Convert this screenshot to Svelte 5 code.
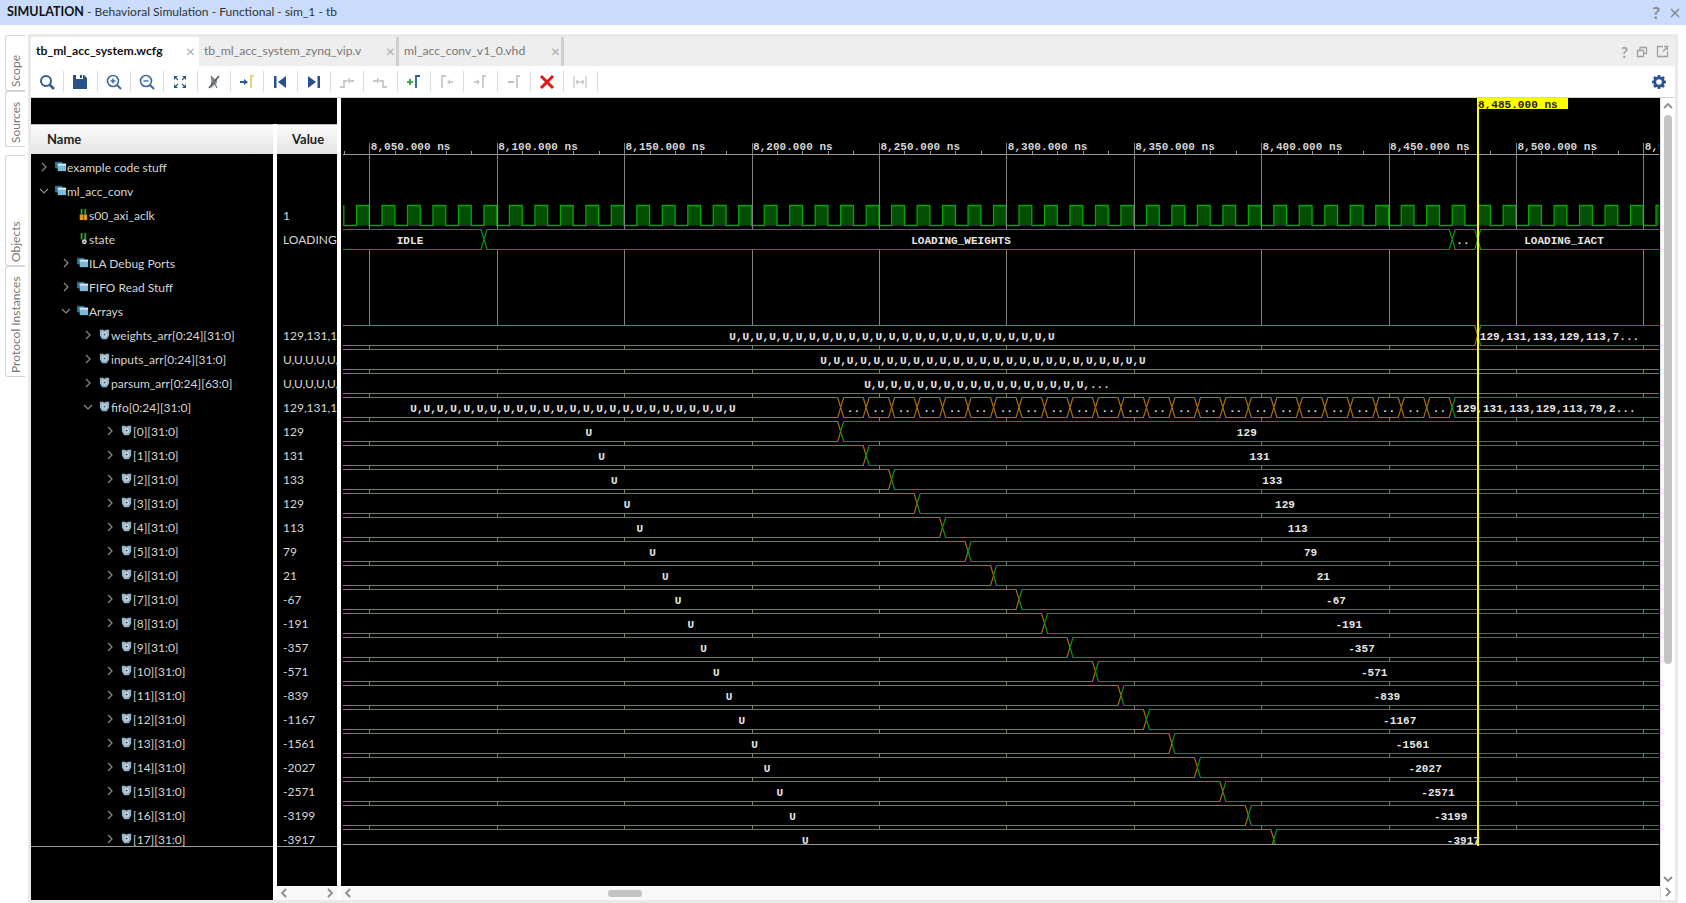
<script>
  // time axis of the wave view
  const pxPerNs = 2.548
  const tx = (t) => 369.3 + (t - 8050) * pxPerNs
  const waveLeft = 343
  const waveRight = 1659
  const rowY = (i) => 167 + 24 * i
  const ORANGE = '#a96f0c'
  const GREEN = '#0b9a0b'

  const fifoVals = [129, 131, 133, 129, 113, 79, 21, -67, -191, -357, -571, -839, -1167, -1561, -2027, -2571, -3199, -3917]

  const rows = [
    { name: 'example code stuff', lvl: 0, kind: 'group', open: false, value: '' },
    { name: 'ml_acc_conv', lvl: 0, kind: 'group', open: true, value: '' },
    { name: 's00_axi_aclk', lvl: 1, kind: 'clock', value: '1' },
    { name: 'state', lvl: 1, kind: 'state', value: 'LOADING_IACT' },
    { name: 'ILA Debug Ports', lvl: 1, kind: 'group', open: false, value: '' },
    { name: 'FIFO Read Stuff', lvl: 1, kind: 'group', open: false, value: '' },
    { name: 'Arrays', lvl: 1, kind: 'group', open: true, value: '' },
    { name: 'weights_arr[0:24][31:0]', lvl: 2, kind: 'arr', open: false, value: '129,131,133,129' },
    { name: 'inputs_arr[0:24][31:0]', lvl: 2, kind: 'arr', open: false, value: 'U,U,U,U,U,U,U,U' },
    { name: 'parsum_arr[0:24][63:0]', lvl: 2, kind: 'arr', open: false, value: 'U,U,U,U,U,U,U,U' },
    { name: 'fifo[0:24][31:0]', lvl: 2, kind: 'arr', open: true, value: '129,131,133,129' },
    ...fifoVals.map((v, k) => ({ name: `[${k}][31:0]`, lvl: 3, kind: 'arr', open: false, value: String(v) }))
  ]

  const majors = []
  for (let t = 8050; t <= 8550; t += 50) majors.push(t)
  const minors = []
  for (let t = 8040; t <= 8560; t += 10) minors.push(t)
  const pulses = []
  for (let t = 8045; t <= 8555; t += 10) pulses.push(t)

  const clockPath = () => {
    let d = `M${tx(8040)} 205 V225.5`
    for (const t of pulses) d += ` H${tx(t)} V205.5 H${tx(t + 5)} V225.5`
    return d + ` H${waveRight}`
  }

  // one bus segment: a black body that hides the grid, and its outline
  const segFill = (a, b, cy) => {
    const top = cy - 9.5
    const bot = cy + 10.5
    const mid = cy + 0.5
    const l = a == null ? `M${waveLeft} ${top}` : `M${a} ${mid} L${a + 3} ${top}`
    const r = b == null ? `H${waveRight} V${bot}` : `H${b - 3} L${b} ${mid} L${b - 3} ${bot}`
    const back = a == null ? `H${waveLeft}` : `H${a + 3}`
    return `${l} ${r} ${back} Z`
  }
  const segLine = (a, b, cy) => {
    const top = cy - 9.5
    const bot = cy + 10.5
    const mid = cy + 0.5
    const l = a == null ? `M${waveLeft} ${top}` : `M${a} ${mid} L${a + 3} ${top}`
    const r = b == null ? `H${waveRight} M${waveRight} ${bot}` : `H${b - 3} L${b} ${mid} L${b - 3} ${bot}`
    const back = a == null ? `H${waveLeft}` : `H${a + 3} L${a} ${mid}`
    return `${l} ${r} ${back}`
  }

  const mid = (a, b) => ((a ?? waveLeft) + (b ?? waveRight)) / 2 - 3
  const us = (n) => Array(n).fill('U').join(',')

  const buses = []
  const bus = (i, parts) => buses.push({ cy: rowY(i), parts })

  const stateA = tx(8095)
  const stateB = tx(8475)
  const stateC = tx(8485)
  bus(3, [
    { a: null, b: stateA, c: GREEN, label: 'IDLE', lx: 410 },
    { a: stateA, b: stateB, c: GREEN, label: 'LOADING_WEIGHTS', lx: 961 },
    { a: stateB, b: stateC, c: GREEN, label: '..', lx: 1463 },
    { a: stateC, b: null, c: GREEN, label: 'LOADING_IACT', lx: 1564 }
  ])
  bus(7, [
    { a: null, b: stateC, c: ORANGE, label: us(25), lx: 892 },
    { a: stateC, b: null, c: GREEN, label: '129,131,133,129,113,7...', lx: 1559.5 }
  ])
  bus(8, [{ a: null, b: null, c: ORANGE, label: us(25), lx: 983 }])
  bus(9, [{ a: null, b: null, c: ORANGE, label: 'U,'.repeat(17) + '...', lx: 987 }])

  const fifoParts = [{ a: null, b: tx(8235), c: ORANGE, label: us(25), lx: 573 }]
  for (let k = 0; k < 24; k++) {
    const a = tx(8235 + k * 10)
    const b = tx(8245 + k * 10)
    fifoParts.push({ a, b, c: ORANGE, label: '..', lx: (a + b) / 2 })
  }
  fifoParts.push({ a: tx(8475), b: null, c: GREEN, label: '129,131,133,129,113,79,2...', lx: 1546 })
  bus(10, fifoParts)

  fifoVals.forEach((v, k) => {
    const x = tx(8235 + k * 10)
    bus(11 + k, [
      { a: null, b: x, c: ORANGE, label: 'U', lx: mid(null, x) },
      { a: x, b: null, c: GREEN, label: String(v), lx: mid(x, null) }
    ])
  })
</script>

{#snippet chevron(open)}
  <svg class="chev" width="10" height="10" viewBox="0 0 10 10">
    {#if open}
      <path d="M1 3l4 4 4-4" />
    {:else}
      <path d="M3 1l4 4-4 4" />
    {/if}
  </svg>
{/snippet}

{#snippet rowIcon(kind)}
  <svg class="ricon" width="13" height="13" viewBox="0 0 14 14">
    {#if kind === 'group'}
      <rect x="1" y="2" width="8" height="7" fill="#2c6f8f" />
      <rect x="4" y="4" width="9" height="8" fill="#7fb9da" />
      <rect x="4" y="4" width="9" height="2" fill="#d7e9f3" />
    {:else if kind === 'arr'}
      <path d="M2 2h3.5l1.5 1 1.5-1H12v6l-2.5 4h-5L2 8z" fill="#8fb6cf" />
      <circle cx="7" cy="7" r="2.6" fill="#d9d9d9" />
      <circle cx="7" cy="7" r="1.2" fill="#555" />
    {:else if kind === 'clock'}
      <rect x="5" y="1" width="2" height="6" fill="#2f9e2f" />
      <rect x="9" y="1" width="2" height="6" fill="#2f9e2f" />
      <rect x="4" y="7" width="8" height="6" fill="#e59a1c" />
      <rect x="7.5" y="7" width="1" height="6" fill="#444" />
    {:else}
      <rect x="5" y="1" width="2" height="7" fill="#2f9e2f" />
      <rect x="9" y="1" width="2" height="7" fill="#2f9e2f" />
      <circle cx="9" cy="10.5" r="2.6" fill="#ddd" />
      <circle cx="9" cy="10.5" r="1.1" fill="#444" />
    {/if}
  </svg>
{/snippet}

<div class="title">
  <div class="title-text"><b>SIMULATION</b> - Behavioral Simulation - Functional - sim_1 - tb</div>
  <span class="q">?</span>
  <svg class="x" width="12" height="12" viewBox="0 0 12 12"><path d="M2 2l8 8M10 2l-8 8" /></svg>
</div>

<div class="main">
  <div class="side">
    <div class="stack">
      <div class="stab one"><span>Scope</span></div>
      <div class="stab one"><span>Sources</span></div>
    </div>
    <div class="stack">
      <div class="stab two"><span>Objects</span></div>
      <div class="stab two"><span>Protocol Instances</span></div>
    </div>
  </div>

  <div class="window">
    <div class="tabs">
      <div class="tab active t1"><span>tb_ml_acc_system.wcfg</span><i>×</i></div>
      <div class="tab t2"><span>tb_ml_acc_system_zynq_vip.v</span><i>×</i></div>
      <div class="tab t3"><span>ml_acc_conv_v1_0.vhd</span><i>×</i></div>
      <div class="tab-tools">
        <span class="help">?</span>
        <svg width="12" height="12" viewBox="0 0 12 12"><path d="M1.5 4.5h6v6h-6zM4 4.500V1.500h6.500v6H7.500" /></svg>
        <svg width="13" height="13" viewBox="0 0 13 13"><path d="M7 1.500H1.500v10h10V6M7 6.500l4.500-4.500M8 1.500h3.500V5" /></svg>
      </div>
    </div>

    <div class="toolbar">
      <div class="tb"><svg viewBox="0 0 20 20"><circle cx="9" cy="9" r="5" fill="none" stroke="#2f5f93" stroke-width="2" /><path d="M12.500 12.500L17 17" stroke="#2f5f93" stroke-width="2.600" /></svg></div>
      <div class="tb"><svg viewBox="0 0 20 20"><path d="M3 3h3v4h7V3h1l3 3v11H3z" fill="#27508c" /><rect x="10" y="3" width="2" height="3" fill="#27508c" /></svg></div>
      <div class="tb"><svg viewBox="0 0 20 20"><circle cx="9" cy="9" r="5.500" fill="none" stroke="#3b6a9c" stroke-width="1.600" /><path d="M6.500 9h5M9 6.500v5" stroke="#3b6a9c" stroke-width="1.400" /><path d="M13 13l4 4" stroke="#3b6a9c" stroke-width="2.200" /></svg></div>
      <div class="tb"><svg viewBox="0 0 20 20"><circle cx="9" cy="9" r="5.500" fill="none" stroke="#3b6a9c" stroke-width="1.600" /><path d="M6.500 9h5" stroke="#3b6a9c" stroke-width="1.400" /><path d="M13 13l4 4" stroke="#3b6a9c" stroke-width="2.200" /></svg></div>
      <div class="tb"><svg viewBox="0 0 20 20"><path d="M4 4h4L4 8zM16 4v4l-4-4zM4 16v-4l4 4zM16 16h-4l4-4z" fill="#2a5a92" /><path d="M6 6l2 2M14 6l-2 2M6 14l2-2M14 14l-2-2" stroke="#2a5a92" stroke-width="1.200" /></svg></div>
      <div class="tb"><svg viewBox="0 0 20 20"><path d="M7 4l6 4v3l-6 5z" fill="#8d9aa8" /><path d="M5 16L15 4" stroke="#555" stroke-width="1.500" /><path d="M7 4l6 12" stroke="#777" stroke-width="1.200" /></svg></div>
      <div class="tb"><svg viewBox="0 0 20 20"><path d="M3 9h4V7l4 3-4 3v-2H3z" fill="#2a5a92" /><path d="M17 4h-3v12" fill="none" stroke="#efcf78" stroke-width="2" /></svg></div>
      <div class="tb"><svg viewBox="0 0 20 20"><rect x="4" y="4" width="2.500" height="12" fill="#27508c" /><path d="M16 4v12l-8-6z" fill="#27508c" /></svg></div>
      <div class="tb"><svg viewBox="0 0 20 20"><rect x="13.500" y="4" width="2.500" height="12" fill="#27508c" /><path d="M4 4v12l8-6z" fill="#27508c" /></svg></div>
      <div class="tb"><svg viewBox="0 0 20 20"><path d="M3 15h4V9h3" fill="none" stroke="#c8c8c8" stroke-width="1.800" /><path d="M17 8h-4V5l-3 3.500 3 3.500V10h4z" fill="#c8c8c8" /></svg></div>
      <div class="tb"><svg viewBox="0 0 20 20"><path d="M17 15h-4V9h-3" fill="none" stroke="#c8c8c8" stroke-width="1.800" /><path d="M3 8h4V5l3 3.500L7 12v-2H3z" fill="#c8c8c8" /></svg></div>
      <div class="tb"><svg viewBox="0 0 20 20"><path d="M3 10h6M6 7v6" stroke="#3daa48" stroke-width="2" /><path d="M16 4h-4v12" fill="none" stroke="#2f5f93" stroke-width="1.800" /></svg></div>
      <div class="tb"><svg viewBox="0 0 20 20"><path d="M9 4H5v12" fill="none" stroke="#c8c8c8" stroke-width="1.800" /><path d="M16 9h-3V7l-3 3 3 3v-2h3z" fill="#c8c8c8" /></svg></div>
      <div class="tb"><svg viewBox="0 0 20 20"><path d="M16 4h-3v12" fill="none" stroke="#c8c8c8" stroke-width="1.800" /><path d="M4 9h3V7l3 3-3 3v-2H4z" fill="#c8c8c8" /></svg></div>
      <div class="tb"><svg viewBox="0 0 20 20"><path d="M4 10h6" stroke="#b8b8b8" stroke-width="1.800" /><path d="M16 4h-3v12" fill="none" stroke="#c8c8c8" stroke-width="1.800" /></svg></div>
      <div class="tb"><svg viewBox="0 0 20 20"><path d="M4 4l12 12M16 4L4 16" stroke="#e01818" stroke-width="3" /></svg></div>
      <div class="tb last"><svg viewBox="0 0 20 20"><path d="M4 4v12M16 4v12M6 10h8M6 10l2-2M6 10l2 2M14 10l-2-2M14 10l-2 2" fill="none" stroke="#c8c8c8" stroke-width="1.300" /></svg></div>
      <div class="gear">
        <svg viewBox="0 0 20 20" width="20" height="20">
          <circle cx="10" cy="10" r="4.300" fill="none" stroke="#2a5590" stroke-width="3" />
          <path d="M10 3v3M10 14v3M3 10h3M14 10h3M5 5l2 2M13 13l2 2M15 5l-2 2M7 13l-2 2" stroke="#2a5590" stroke-width="2.600" />
        </svg>
      </div>
    </div>

    <div class="content">
      <div class="left">
        <div class="spacer"></div>
        <div class="head name">Name</div>
        <div class="head val">Value</div>
        <div class="col names">
          <div class="clip">
            {#each rows as r}
              <div class="row l{r.lvl}">
                <span class="chev-box">
                  {#if r.open !== undefined}{@render chevron(r.open)}{/if}
                </span>
                {@render rowIcon(r.kind)}
                <span class="label">{r.name}</span>
              </div>
            {/each}
          </div>
        </div>
        <div class="col values">
          <div class="clip">
            {#each rows as r}
              <div class="row vrow">{r.value}</div>
            {/each}
          </div>
          <div class="rest"></div>
          <div class="hbar">
            <svg width="10" height="12" viewBox="0 0 10 12"><path d="M7 2L3 6l4 4" /></svg>
            <svg width="10" height="12" viewBox="0 0 10 12"><path d="M3 2l4 4-4 4" /></svg>
          </div>
        </div>
      </div>

      <div class="wave-col">
        <svg class="wave" viewBox="341 98 1319 788" width="1319" height="788">
          <defs>
            <clipPath id="view"><rect x={waveLeft} y="98" width={waveRight - waveLeft} height="746" /></clipPath>
          </defs>
          <g clip-path="url(#view)">
            {#each pulses as t}
              <rect x={tx(t)} y="205.500" width={5 * pxPerNs} height="20" fill="#024f02" />
            {/each}
            <path d={clockPath()} fill="none" stroke="#06a506" stroke-width="1.300" />

            <path d="M{waveLeft} 154.500H{waveRight}" stroke="#9a9a9a" />
            {#each minors as t}
              <path d="M{Math.round(tx(t)) + 0.5} 151V154" stroke="#9a9a9a" />
            {/each}
            {#each majors as t}
              <path d="M{Math.round(tx(t)) + 0.5} 143V844" stroke="#808080" />
              <text class="ruler" x={tx(t) + 1.500} y="150">{t.toLocaleString('en-US')}.000 ns</text>
            {/each}

            {#each buses as b}
              {#each b.parts as p}
                <path d={segFill(p.a, p.b, b.cy)} fill="#000" />
                <path d={segLine(p.a, p.b, b.cy)} fill="none" stroke={p.c} stroke-width="1.200" />
              {/each}
              {#each b.parts as p}
                <text class="sig" x={p.lx} y={b.cy + 4.500}>{p.label}</text>
              {/each}
            {/each}
          </g>
          <path d="M{waveLeft} 844.500H{waveRight}" stroke="#9a9a9a" />
          <rect x="1477" y="98" width="2" height="748" fill="#ffff00" />
          <rect x="1477" y="98" width="91" height="11" fill="#ffff00" />
          <text class="flag" x="1478" y="108">8,485.000 ns</text>
        </svg>
        <div class="hbar wave-bar">
          <svg width="10" height="12" viewBox="0 0 10 12"><path d="M7 2L3 6l4 4" /></svg>
          <div class="hthumb"></div>
        </div>
      </div>

      <div class="vbar">
        <svg width="12" height="8" viewBox="0 0 12 8"><path d="M2 6l4-4 4 4" /></svg>
        <div class="vthumb"></div>
        <svg class="down" width="12" height="8" viewBox="0 0 12 8"><path d="M2 2l4 4 4-4" /></svg>
        <svg class="corner" width="10" height="12" viewBox="0 0 10 12"><path d="M3 2l4 4-4 4" /></svg>
      </div>
    </div>
  </div>
</div>

<style>
  :global(body) {
    margin: 0;
    background: #fff;
    overflow: hidden;
    font-family: Lato, 'Noto Sans', sans-serif;
  }
  .title {
    height: 25px;
    background: #c9dcfb;
    display: flex;
    align-items: center;
    padding: 0 5px 0 7px;
    font-size: 12px;
    color: #333;
  }
  .title-text {
    flex: 1;
    padding-bottom: 2px;
  }
  .title-text b {
    color: #111;
    font-size: 12.5px;
  }
  .title .q {
    color: #888;
    font-size: 17px;
    font-weight: 700;
    margin-right: 9px;
  }
  .title .x path {
    stroke: #888;
    stroke-width: 1.500;
    fill: none;
  }
  .main {
    display: flex;
    height: 878px;
    padding-top: 9px;
    box-sizing: border-box;
  }
  .side {
    width: 28px;
    padding: 1px 0 0 5px;
    box-sizing: border-box;
    display: flex;
    flex-direction: column;
    gap: 8px;
  }
  .stack {
    display: flex;
    flex-direction: column;
  }
  .stab {
    width: 20px;
    box-sizing: border-box;
    border: 1px solid #d4d4d4;
    border-right: none;
    border-radius: 3px 0 0 3px;
    display: flex;
    justify-content: center;
    color: #777;
    font-size: 12px;
  }
  .stab span {
    writing-mode: vertical-rl;
    transform: rotate(180deg);
    padding-top: 3px;
    white-space: nowrap;
  }
  .stab.one {
    height: 56px;
  }
  .stab.two {
    height: 111px;
  }
  .window {
    width: 1650px;
    height: 869px;
    background: #e9e9e9;
    padding: 3px 3px 3px 3px;
    box-sizing: border-box;
    display: flex;
    flex-direction: column;
  }
  .tabs {
    height: 29px;
    display: flex;
    background: #eee;
    flex: none;
  }
  .tab {
    display: flex;
    align-items: center;
    justify-content: space-between;
    box-sizing: border-box;
    padding: 0 1px 2px 5px;
    font-size: 12.2px;
    color: #777;
    border-right: 3px solid #cfcfcf;
    white-space: nowrap;
  }
  .t1 {
    width: 168px;
    padding-right: 4px;
  }
  .t2 {
    width: 200px;
  }
  .t3 {
    width: 165px;
  }
  .tab.active {
    background: #fff;
    color: #111;
    font-weight: 700;
    border-right: none;
  }
  .tab i {
    font-style: normal;
    font-weight: 400;
    color: #aaa;
    font-size: 16px;
  }
  .tab-tools {
    margin-left: auto;
    display: flex;
    align-items: center;
    gap: 8px;
    padding-right: 6px;
    color: #a0a0a0;
  }
  .tab-tools .help {
    font-size: 15px;
    font-weight: 700;
  }
  .tab-tools path {
    fill: none;
    stroke: #a0a0a0;
    stroke-width: 1.300;
  }
  .toolbar {
    height: 32px;
    flex: none;
    background: #fff;
    border-bottom: 1px solid #d0d0d0;
    box-sizing: border-box;
    display: flex;
    align-items: center;
    padding-left: 0;
  }
  .tb {
    width: 33.330px;
    height: 21px;
    box-sizing: border-box;
    display: flex;
    align-items: center;
    justify-content: center;
    border-right: 1px solid #dedede;
  }
  .tb svg {
    width: 20px;
    height: 20px;
  }
  .gear {
    margin-left: auto;
    padding-right: 6px;
    display: flex;
  }
  .content {
    flex: 1;
    display: flex;
    background: #fff;
    min-height: 0;
  }
  .left {
    width: 306px;
    flex: none;
    display: grid;
    grid-template-columns: 242px 60px;
    column-gap: 4px;
    grid-template-rows: 26px 30px 1fr;
  }
  .spacer {
    grid-column: 1 / 3;
    background: #000;
  }
  .head {
    background: linear-gradient(#fbfbfb, #e4e4e4);
    border-top: 1px solid #bbb;
    box-sizing: border-box;
    display: flex;
    align-items: center;
    font-weight: 700;
    font-size: 13px;
    color: #222;
    padding-bottom: 2px;
  }
  .head.name {
    padding-left: 16px;
  }
  .head.val {
    padding-left: 15px;
  }
  .col {
    background: #000;
    display: flex;
    flex-direction: column;
    min-height: 0;
  }
  .clip {
    height: 691px;
    flex: none;
    overflow: hidden;
    border-bottom: 1px solid #9a9a9a;
    padding-top: 1px;
    box-sizing: content-box;
  }
  .rest {
    flex: 1;
  }
  .row {
    height: 24px;
    display: flex;
    align-items: center;
    font-size: 12px;
    color: #d6d6d6;
    white-space: nowrap;
  }
  .vrow {
    padding-left: 6px;
    overflow: hidden;
  }
  .l0 {
    padding-left: 8px;
  }
  .l1 {
    padding-left: 30px;
  }
  .l2 {
    padding-left: 52px;
  }
  .l3 {
    padding-left: 74px;
  }
  .chev-box {
    width: 11px;
    height: 10px;
    display: flex;
    flex: none;
  }
  .chev path {
    fill: none;
    stroke: #8a8a8a;
    stroke-width: 1.200;
  }
  .ricon {
    flex: none;
    margin: 0 0 0 4px;
    position: relative;
    top: -1px;
  }
  .wave-col {
    width: 1319px;
    flex: none;
    margin-left: 4px;
    display: flex;
    flex-direction: column;
  }
  .wave {
    display: block;
    background: #000;
    flex: none;
  }
  .ruler,
  .sig,
  .flag {
    font-family: 'Liberation Mono', monospace;
    font-size: 11px;
    font-weight: 700;
    letter-spacing: 0.04px;
  }
  .ruler {
    fill: #d4d4d4;
  }
  .sig {
    fill: #e6e6e6;
    text-anchor: middle;
  }
  .flag {
    fill: #222;
  }
  .hbar {
    height: 14px;
    background: #f8f8f8;
    display: flex;
    align-items: center;
    justify-content: space-between;
    padding: 0 2px;
    flex: none;
  }
  .hbar path,
  .vbar path {
    fill: none;
    stroke: #8c8c8c;
    stroke-width: 1.800;
  }
  .wave-bar {
    justify-content: flex-start;
  }
  .hthumb {
    width: 34px;
    height: 7px;
    background: #c4c4c4;
    border-radius: 3px;
    margin-left: 255px;
  }
  .vbar {
    width: 15px;
    flex: none;
    display: flex;
    flex-direction: column;
    align-items: center;
    position: relative;
    padding-top: 4px;
    box-sizing: border-box;
    border-left: 1px solid #ddd;
  }
  .vthumb {
    width: 8px;
    height: 549px;
    margin-top: 5px;
    background: #c4c4c4;
    border-radius: 4px;
  }
  .down {
    margin-top: 211px;
  }
  .corner {
    margin-top: 3px;
  }
</style>
